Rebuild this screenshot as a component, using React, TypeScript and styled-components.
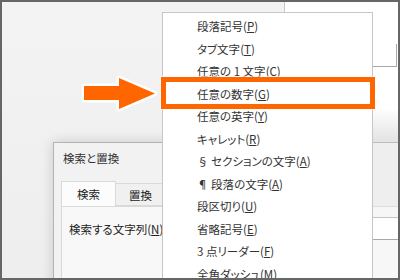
import React from 'react';
import styled, { createGlobalStyle } from 'styled-components';

const GlobalStyle = createGlobalStyle`
  html, body {
    margin: 0;
    padding: 0;
    background: #ffffff;
  }
  body {
    font-family: "Noto Sans CJK JP", "Noto Sans", sans-serif;
  }
`;

const ORANGE = '#ff6600';

const menuItems: { label: string; key: string }[] = [
  { label: '段落記号', key: 'P' },
  { label: 'タブ文字', key: 'T' },
  { label: '任意の 1 文字', key: 'C' },
  { label: '任意の数字', key: 'G' },
  { label: '任意の英字', key: 'Y' },
  { label: 'キャレット', key: 'R' },
  { label: '§ セクションの文字', key: 'A' },
  { label: '¶ 段落の文字', key: 'A' },
  { label: '段区切り', key: 'U' },
  { label: '省略記号', key: 'E' },
  { label: '3 点リーダー', key: 'F' },
  { label: '全角ダッシュ', key: 'M' },
];

const App: React.FC = () => (
  <>
    <GlobalStyle />
    <Stage>
      <BackWindow>
        <TopArea>
          <Field />
        </TopArea>
        <Band $h={43} $bg="#ffffff" />
        <Band $h={32} $bg="linear-gradient(#fdfdfd, #e3e3e3)" $line="#bdbdbd" />
        <Band $h={63} $bg="#eeeeee" $line="#dedede" />
        <Band $h={10} $bg="#f6f6f6" $line="#c4c4c4" />
        <Band $h={21} $bg="#ffffff" $line="#a9a9a9" />
        <Band $h={60} $bg="#f7f7f7" />
      </BackWindow>

      <Dialog>
        <TitleBar>検索と置換</TitleBar>
        <DialogBody>
          <TabRow>
            <Tab $active>検索</Tab>
            <Tab>置換</Tab>
            <Tab>ジャンプ</Tab>
          </TabRow>
          <Panel>
            <FieldLabel>
              検索する文字列(<u>N</u>):
            </FieldLabel>
          </Panel>
        </DialogBody>
      </Dialog>

      <Menu>
        {menuItems.map((item, i) => (
          <MenuItem key={i}>
            {item.label}(<u>{item.key}</u>)
          </MenuItem>
        ))}
      </Menu>

      <Highlight />

      <Arrow viewBox="78 70 84 45" width="84" height="45">
        <path
          d="M84 86 H119 V78 L155 93.5 L119 109 V100 H84 Z"
          fill={ORANGE}
          stroke="#ffffff"
          strokeWidth="5"
          strokeLinejoin="round"
          paintOrder="stroke"
        />
      </Arrow>
    </Stage>
  </>
);

const Stage = styled.div`
  position: relative;
  width: 400px;
  height: 280px;
  box-sizing: border-box;
  border: 2px solid #666666;
  background: linear-gradient(#f3f3f3, #eeeeee);
  overflow: hidden;
  font-family: "Noto Sans CJK JP", "Noto Sans", sans-serif;
  font-feature-settings: "palt";
  color: #333333;
`;

const BackWindow = styled.div`
  position: absolute;
  left: 282px;
  top: 0;
  right: 0;
  bottom: 0;
  display: flex;
  flex-direction: column;
  background: #ffffff;
  border-left: 1px solid #c8c8c8;
`;

const TopArea = styled.div`
  height: 65px;
  display: flex;
  justify-content: flex-end;
  align-items: flex-end;
  padding-right: 1px;
  flex-shrink: 0;
`;

const Field = styled.div`
  width: 60px;
  height: 22px;
  border-right: 1px solid #a8a8a8;
  border-bottom: 1px solid #a8a8a8;
`;

const Band = styled.div<{ $h: number; $bg: string; $line?: string }>`
  height: ${(p) => p.$h}px;
  flex-shrink: 0;
  background: ${(p) => p.$bg};
  border-bottom: ${(p) => (p.$line ? `1px solid ${p.$line}` : 'none')};
`;

const Dialog = styled.div`
  position: absolute;
  left: 51px;
  top: 140px;
  width: 220px;
  height: 160px;
  background: #f2f2f2;
  border: 1px solid #b4b4b4;
  box-shadow: 0 0 12px rgba(0, 0, 0, 0.16);
`;

const TitleBar = styled.div`
  height: 31px;
  line-height: 31px;
  padding-left: 9px;
  font-size: 11.5px;
  color: #333333;
`;

const DialogBody = styled.div`
  padding: 8px 0 0 7px;
`;

const TabRow = styled.div`
  display: flex;
  align-items: flex-end;
  height: 24px;
`;

const Tab = styled.div<{ $active?: boolean }>`
  box-sizing: border-box;
  height: ${(p) => (p.$active ? 25 : 23)}px;
  padding: 0 ${(p) => (p.$active ? 15 : 13)}px;
  line-height: ${(p) => (p.$active ? 24 : 22)}px;
  font-size: 11.5px;
  color: #222222;
  background: ${(p) => (p.$active ? '#fcfcfc' : '#f0f0f0')};
  border: 1px solid #d9d9d9;
  border-bottom: ${(p) => (p.$active ? 'none' : '1px solid #d9d9d9')};
  margin-left: ${(p) => (p.$active ? 0 : -1)}px;
  position: relative;
  z-index: ${(p) => (p.$active ? 1 : 0)};
`;

const Panel = styled.div`
  height: 100px;
  background: #f8f8f8;
  border: 1px solid #d9d9d9;
  padding: 14px 0 0 7px;
`;

const FieldLabel = styled.div`
  font-size: 11.5px;
  line-height: 16px;
  color: #222222;
  white-space: nowrap;
`;

const Menu = styled.div`
  position: absolute;
  left: 160px;
  top: 10px;
  width: 211px;
  height: 290px;
  box-sizing: border-box;
  background: #ffffff;
  border: 1px solid #c6c6c6;
  padding: 2px 0;
  display: flex;
  flex-direction: column;
`;

const MenuItem = styled.div`
  height: 22.5px;
  line-height: 22.5px;
  padding-left: 34px;
  font-size: 11.5px;
  color: #333333;
  white-space: nowrap;
  flex-shrink: 0;
`;

const Highlight = styled.div`
  position: absolute;
  left: 159px;
  top: 75px;
  width: 214px;
  height: 32px;
  box-sizing: border-box;
  border: 5px solid ${ORANGE};
  box-shadow: 0 0 0 1px rgba(255, 255, 255, 0.6);
`;

const Arrow = styled.svg`
  position: absolute;
  left: 76px;
  top: 68px;
  overflow: visible;
`;

export default App;
